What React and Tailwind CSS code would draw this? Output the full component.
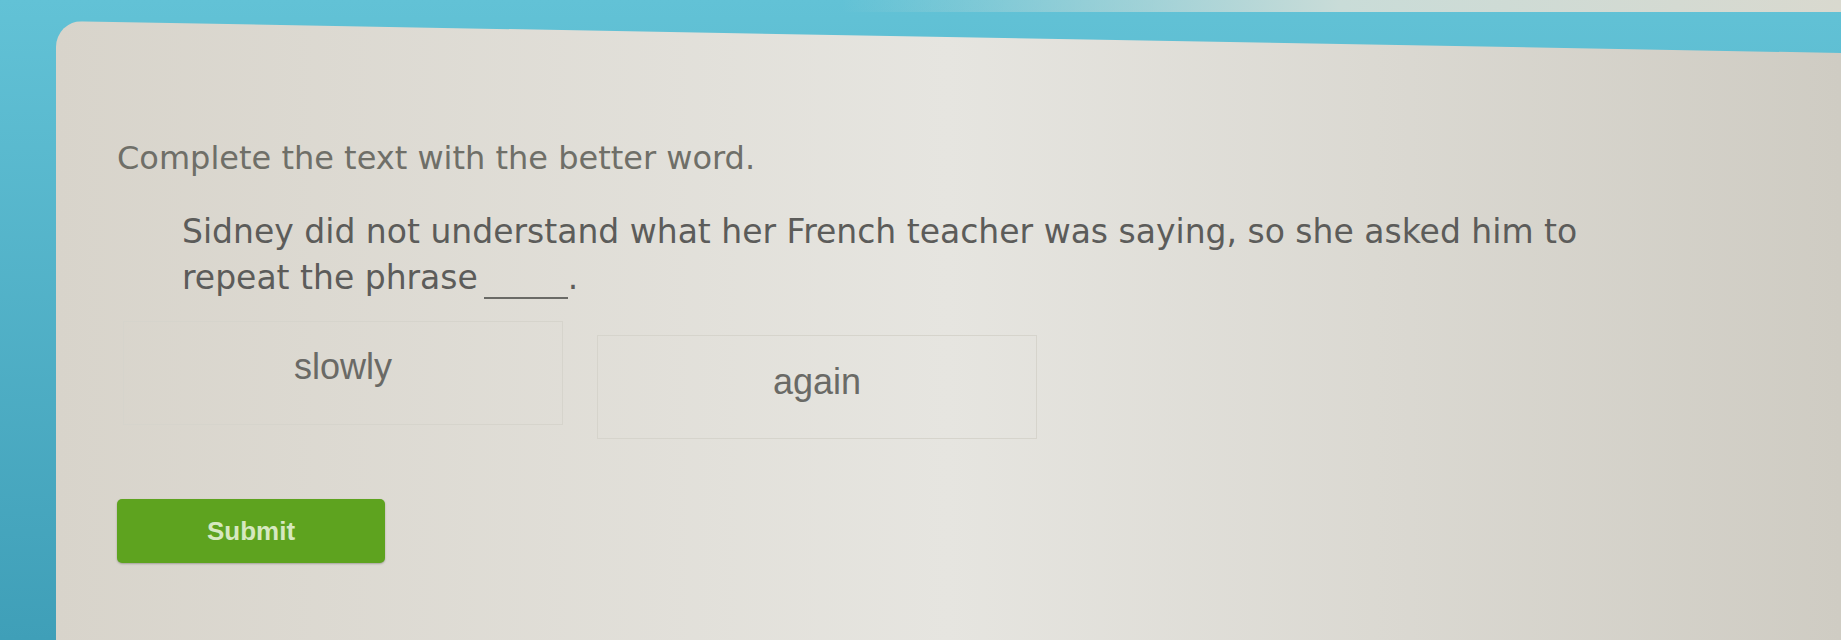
import React from 'react';

const textFont = { fontFamily: '"DejaVu Sans", Verdana, sans-serif' };
const optionFont = { fontFamily: '"Liberation Sans", Arial, sans-serif' };

const Option = ({ label, className }) => (
    <button
        type="button"
        className={`w-[440px] h-[104px] flex items-center justify-center border border-[#d6d4cc] text-[36px] text-[#6a6a66] ${className}`}
        style={optionFont}
    >
        {label}
    </button>
);

const App = () => {
    return (
        <div className="w-full h-[640px] overflow-hidden flex flex-col bg-gradient-to-b from-[#62c2d6] to-[#3f9fb8]">
            <div className="h-[12px] flex shrink-0">
                <div className="flex-1" />
                <div className="w-[1000px] bg-gradient-to-r from-transparent via-[#c9dcd8] to-[#d9d9cf]" />
            </div>
            <div className="flex-1 flex pl-[56px] pt-[9px]">
                <div className="flex-1 rounded-tl-[26px] bg-gradient-to-r from-[#d8d4cb] via-[#e6e5e0] to-[#cfccc3] [clip-path:polygon(0_0,100%_32px,100%_100%,0_100%)] pl-[61px] pt-[117px]">
                    <h1 className="text-[32px] leading-[40px] text-[#6f6f68]" style={textFont}>
                        Complete the text with the better word.
                    </h1>

                    <p className="mt-[31px] ml-[65px] w-[1460px] text-[33px] leading-[46px] text-[#5c5c5a]" style={textFont}>
                        Sidney did not understand what her French teacher was saying, so she asked him to
                        <br />
                        repeat the phrase
                        <span className="inline-block w-[84px] ml-[6px] border-b-2 border-[#6a6a66] translate-y-[10px]" />
                        .
                    </p>

                    <div className="mt-[20px] ml-[6px] flex gap-[34px]">
                        <Option label="slowly" className="pb-[12px]" />
                        <Option label="again" className="mt-[14px] pb-[10px]" />
                    </div>

                    <button
                        type="button"
                        className="mt-[60px] w-[268px] h-[64px] rounded-[5px] bg-[#5ea31f] shadow-[0_1px_2px_rgba(0,0,0,0.25)] text-[26px] font-bold text-[#d6e8c0]"
                        style={optionFont}
                    >
                        Submit
                    </button>
                </div>
            </div>
        </div>
    );
};

export default App;
